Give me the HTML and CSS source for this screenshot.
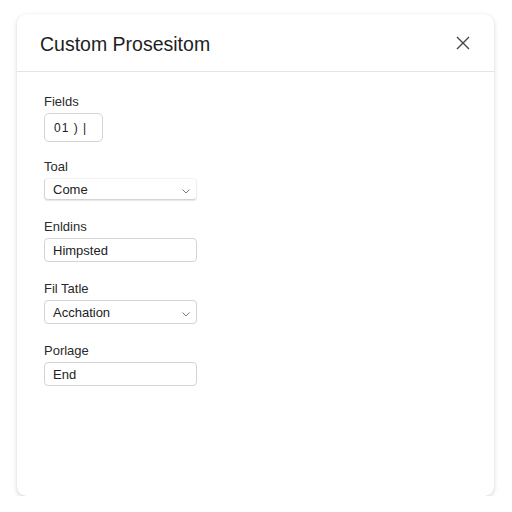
FILE: index.html
```html
<!DOCTYPE html>
<html>
<head>
<meta charset="utf-8">
<link rel="stylesheet" href="styles.css">
</head>
<body>
<div class="card">
  <div class="header">
    <h1 class="title">Custom Prosesitom</h1>
    <svg class="close" width="14" height="14" viewBox="0 0 14 14"><path d="M1 1L13 13M13 1L1 13" stroke="#444" stroke-width="1.4" fill="none"/></svg>
  </div>
  <div class="body">
    <div class="field f1">
      <div class="label">Fields</div>
      <div class="input small">01 ) |</div>
    </div>
    <div class="field f2">
      <div class="label">Toal</div>
      <div class="input select flat">Come<svg class="chev" width="8" height="5" viewBox="0 0 8 5"><path d="M0.5 0.5L4 4L7.5 0.5" stroke="#777" stroke-width="1" fill="none"/></svg></div>
    </div>
    <div class="field f3">
      <div class="label">Enldins</div>
      <div class="input">Himpsted</div>
    </div>
    <div class="field f3">
      <div class="label">Fil Tatle</div>
      <div class="input select">Acchation<svg class="chev" width="8" height="5" viewBox="0 0 8 5"><path d="M0.5 0.5L4 4L7.5 0.5" stroke="#777" stroke-width="1" fill="none"/></svg></div>
    </div>
    <div class="field f3">
      <div class="label">Porlage</div>
      <div class="input">End</div>
    </div>
  </div>
</div>
</body>
</html>
```
FILE: styles.css
```css
html, body { margin: 0; padding: 0; background: #fff; }
body { font-family: "Liberation Sans", Arial, sans-serif; color: #222; }
.card {
  margin: 14px 0 0 17px;
  width: 477px;
  height: 482px;
  box-sizing: border-box;
  border-radius: 9px;
  background: #fff;
  box-shadow: 0 2px 5px rgba(0,0,0,0.15), 0 0 1px rgba(0,0,0,0.12);
}
.header {
  height: 58px;
  box-sizing: border-box;
  border-bottom: 1px solid #e4e4e4;
  display: flex;
  align-items: center;
  justify-content: space-between;
  padding: 0 24px 0 23px;
}
.title { margin: 3px 0 0 0; font-size: 19.5px; font-weight: 400; color: #1e1e1e; }
.close { margin-top: 1px; }
.body { padding: 22px 0 0 27px; display: flex; flex-direction: column; }
.field { display: flex; flex-direction: column; }
.f2 { margin-top: 17px; }
.f3 { margin-top: 19px; }
.label { font-size: 13px; line-height: 16px; color: #2a2a2a; margin-bottom: 3px; }
.input {
  box-sizing: border-box;
  width: 153px;
  height: 24px;
  border: 1px solid #d4d4d4;
  border-radius: 4px;
  font-size: 13px;
  padding-left: 8px;
  display: flex;
  align-items: center;
  color: #222;
  position: relative;
}
.input.small { width: 59px; height: 29px; border-radius: 5px; padding-left: 9px; letter-spacing: 1px; font-size: 12px; }
.input.flat { height: 22px; border-top-color: #f2f2f2; border-right-color: #eee; box-shadow: 0 1px 1px rgba(0,0,0,0.10); }
.chev { position: absolute; right: 6px; top: 11px; }
.flat .chev { top: 10px; }
```
